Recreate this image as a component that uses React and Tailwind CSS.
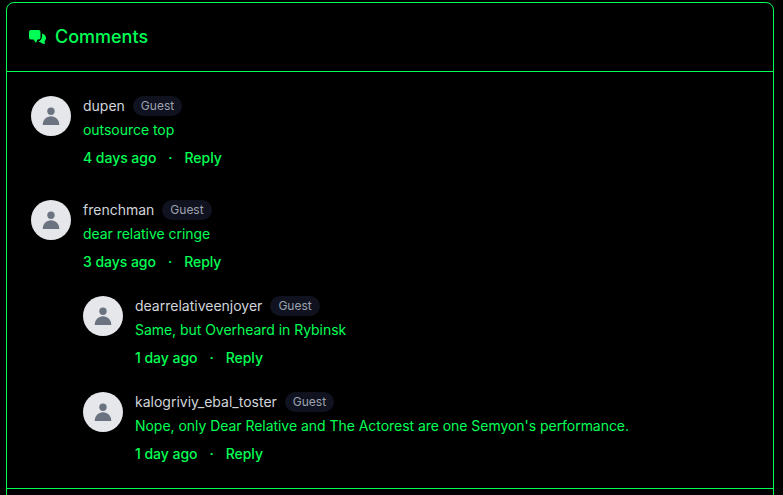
const comments = [
  {
    name: 'dupen',
    text: 'outsource top',
    time: '4 days ago',
  },
  {
    name: 'frenchman',
    text: 'dear relative cringe',
    time: '3 days ago',
    replies: [
      { name: 'dearrelativeenjoyer', text: 'Same, but Overheard in Rybinsk', time: '1 day ago' },
      { name: 'kalogriviy_ebal_toster', text: "Nope, only Dear Relative and The Actorest are one Semyon's performance.", time: '1 day ago' },
    ],
  },
]

function CommentsIcon() {
  return (
    <svg viewBox="0 0 18 16" className="h-4 w-[18px] text-[#00ff55]" fill="currentColor">
      <path d="M2 1h7.500a2 2 0 0 1 2 2v5.500a2 2 0 0 1-2 2H8.500L7 14 4.500 10.500H2a2 2 0 0 1-2-2V3a2 2 0 0 1 2-2z" />
      <path d="M13 4.500c2.500.8 4 2.500 4 4.500 0 1.300-.5 2.300-1.500 3l.5 3c-2-.1-3.600-.7-5-2H9c2.500-.8 4.500-3.500 4-8.500z" />
    </svg>
  )
}

function Avatar() {
  return (
    <div className="flex h-10 w-10 shrink-0 items-center justify-center rounded-full bg-[#e5e7eb]">
      <svg viewBox="0 0 20 20" className="h-5 w-5 text-[#6b7280]" fill="currentColor">
        <circle cx="10" cy="5.300" r="3.700" />
        <path d="M1.700 19c0-5 3.600-8.800 8.300-8.800s8.300 3.800 8.300 8.800z" />
      </svg>
    </div>
  )
}

function Comment({ comment }) {
  return (
    <div className="flex gap-3">
      <Avatar />
      <div className="min-w-0 flex-1">
        <div className="flex items-center gap-2">
          <span className="text-sm leading-5 text-[#d1d5db]">{comment.name}</span>
          <span className="rounded-full bg-[#10121f] px-2 text-xs leading-5 text-[#9ca3af]">Guest</span>
        </div>
        <p className="mt-1 text-sm leading-5 tracking-[-0.04px] text-[#00ff55]">{comment.text}</p>
        <div className="mt-2 flex items-center text-sm leading-5 font-medium tracking-[-0.04px] text-[#00ff55]">
          <span>{comment.time}</span>
          <span className="mx-3">·</span>
          <span>Reply</span>
        </div>
      </div>
    </div>
  )
}

export default function App() {
  return (
    <div className="h-[495px] overflow-hidden bg-black pt-[2px] pl-[6px] font-['Inter',sans-serif]">
      <div className="h-[600px] w-[768px] rounded-t-lg border border-[#00ff55]">
        <div className="flex h-[69px] items-center gap-2 border-b border-[#00ff55] px-[22px]">
          <CommentsIcon />
          <h2 className="text-lg leading-7 font-medium text-[#00ff55]">Comments</h2>
        </div>
        <div className="border-b border-[#00ff55] p-6">
          <div className="flex flex-col gap-8">
            {comments.map((c) => (
              <div key={c.name}>
                <Comment comment={c} />
                {c.replies && (
                  <div className="mt-6 flex flex-col gap-6 pl-[52px]">
                    {c.replies.map((r) => (
                      <Comment key={r.name} comment={r} />
                    ))}
                  </div>
                )}
              </div>
            ))}
          </div>
        </div>
      </div>
    </div>
  )
}
